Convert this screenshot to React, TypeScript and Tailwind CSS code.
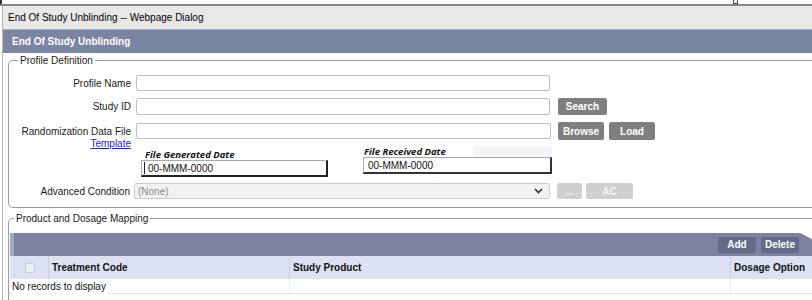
import React from "react";

const Btn = ({ children, w, h = "h-[17px]", cls = "bg-[#7f7f7f] text-white" }: { children: React.ReactNode; w: string; h?: string; cls?: string }) => (
  <div className={`${w} ${h} ${cls} rounded-[2px] flex items-center justify-center font-bold text-[10px]`}>{children}</div>
);

export default function App() {
  return (
    <div className="w-[812px] h-[300px] overflow-hidden bg-white relative text-[10px] text-[#1a1a1a] font-['Liberation_Sans',Arial,sans-serif] leading-[13px]">
      {/* top strip */}
      <div className="h-[6px] relative border-b-2 border-[#858585] bg-white">
        <div className="absolute left-0 top-0 w-[2px] h-[4px] bg-[#333]" />
        <div className="absolute left-[733px] top-0 w-[5px] h-[4px] border border-t-0 border-[#444]" />
      </div>
      <div className="ml-[2px] border-l border-[#b4b4b4]">
        {/* title bar */}
        <div className="h-[23px] bg-[#e8e8e8] pl-[5px] flex items-center text-black">
          End Of Study Unblinding -- Webpage Dialog
        </div>
        {/* header */}
        <div className="h-[24px] bg-[#7b84a1] border-t border-[#aab0c5] pl-[9px] flex items-center text-white font-bold">
          End Of Study Unblinding
        </div>
        {/* body */}
        <div className="pl-[5px]">
          <fieldset className="mt-[1px] border border-[#9c9c9c] rounded-[5px] w-[830px] pb-[8px]">
            <legend className="ml-[9px] px-[2px] leading-[13px]">Profile Definition</legend>
            {/* Profile Name */}
            <div className="flex items-center h-[16px] mt-[8px]">
              <div className="w-[122px] text-right">Profile Name</div>
              <div className="ml-[5px] w-[414px] h-[16px] border border-[#b9bdd1] rounded-[2px] bg-white" />
            </div>
            {/* Study ID */}
            <div className="flex items-center h-[17px] mt-[7px]">
              <div className="w-[122px] text-right">Study ID</div>
              <div className="ml-[5px] w-[414px] h-[17px] border border-[#b9bdd1] rounded-[2px] bg-white" />
              <div className="ml-[8px]"><Btn w="w-[49px]">Search</Btn></div>
            </div>
            {/* Randomization */}
            <div className="flex items-center h-[16px] mt-[8px]">
              <div className="w-[122px] text-right">Randomization Data File</div>
              <div className="ml-[5px] w-[415px] h-[16px] border border-[#b9bdd1] rounded-[2px] bg-white" />
              <div className="ml-[7px] flex gap-[5px]">
                <Btn w="w-[46px]" h="h-[18px]">Browse</Btn>
                <Btn w="w-[46px]" h="h-[18px]">Load</Btn>
              </div>
            </div>
            <div className="w-[122px] text-right leading-[10px] h-[7px]">
              <span className="text-[#2222dd] underline">Template</span>
            </div>
            {/* Dates */}
            <div className="flex items-start h-[31px]">
              <div className="ml-[132px] mt-[3px]">
                <div className="pl-[4px] h-[11px] leading-[11px] font-['Open_Sans',sans-serif] font-bold italic text-[9.5px] text-[#111]">File Generated Date</div>
                <div className="w-[187px] h-[17px] border border-[#aaa] border-r-2 border-b-2 border-r-[#222] border-b-[#222] bg-white flex items-center pl-[2px]">
                  <span className="w-[1px] h-[12px] bg-[#222] mr-[3px]" />
                  <span className="text-[#111]">00-MMM-0000</span>
                </div>
              </div>
              <div className="ml-[35px]">
                <div className="flex">
                  <div className="pl-[1px] w-[110px] h-[11px] leading-[11px] font-['Open_Sans',sans-serif] font-bold italic text-[9.5px] text-[#111]">File Received Date</div>
                  <div className="w-[79px] h-[11px] bg-[#f3f5f9]" />
                </div>
                <div className="w-[189px] h-[17px] border border-[#aaa] border-r-2 border-b-2 border-r-[#333] border-b-[#333] bg-white flex items-center pl-[4px]">
                  <span className="text-[#111]">00-MMM-0000</span>
                </div>
              </div>
            </div>
            {/* Advanced Condition */}
            <div className="flex items-center h-[16px] mt-[6px]">
              <div className="w-[121px] text-right">Advanced Condition</div>
              <div className="ml-[4px] w-[416px] h-[16px] border border-[#c9cbd8] rounded-[2px] bg-[#f2f2f2] flex items-center pl-[3px] pr-[6px] justify-between">
                <span className="text-[#8a8a8a]">(None)</span>
                <svg width="9" height="6" viewBox="0 0 9 6"><polyline points="1,1 4.5,4.5 8,1" fill="none" stroke="#333" strokeWidth="1.6" /></svg>
              </div>
              <div className="ml-[7px] flex gap-[4px]">
                <Btn w="w-[25px]" h="h-[16px]" cls="bg-[#cfcfcf] text-[#f4f4f4]">...</Btn>
                <Btn w="w-[47px]" h="h-[16px]" cls="bg-[#cfcfcf] text-[#f4f4f4]">AC</Btn>
              </div>
            </div>
          </fieldset>

          <fieldset className="mt-[4px] border border-b-0 border-[#9c9c9c] rounded-t-[5px] w-[830px] h-[120px]">
            <legend className="ml-[5px] px-[2px] leading-[13px]">Product and Dosage Mapping</legend>
            <div className="ml-[1px] mt-[8px] w-[815px]">
              {/* toolbar */}
              <div className="flex h-[23px]">
                <div className="w-[4px] bg-[#a3a9c0]" />
                <div className="w-[786px] bg-[#7b83a0] flex items-center justify-end gap-[5px] pr-[1px]">
                  <Btn w="w-[38px]" h="h-[16px]" cls="bg-[#646b89] text-white">Add</Btn>
                  <Btn w="w-[38px]" h="h-[16px]" cls="bg-[#646b89] text-white">Delete</Btn>
                </div>
                <div className="flex-1 bg-white relative">
                  <div className="absolute inset-0 bg-[#a3a9c0] [clip-path:polygon(0_0,60%_35%,60%_100%,0_100%)]" />
                  <div className="absolute inset-0 bg-[#7b83a0] [clip-path:polygon(0_0,50%_28%,50%_100%,0_100%)]" />
                </div>
              </div>
              {/* header */}
              <div className="flex h-[23px] bg-[#dce2f3] font-bold text-[#111]">
                <div className="w-[39px] border-r border-[#c9cfe2] flex items-center pl-[15px]">
                  <div className="w-[10px] h-[10px] rounded-[2px] bg-[#eceff7] border border-[#c3c8dc]" />
                </div>
                <div className="w-[241px] border-r border-[#c9cfe2] flex items-center pl-[3px]">Treatment Code</div>
                <div className="w-[441px] border-r border-[#c9cfe2] flex items-center pl-[3px]">Study Product</div>
                <div className="flex-1 flex items-center pl-[3px]">Dosage Option</div>
              </div>
              {/* row */}
              <div className="relative flex h-[15px] border-b border-[#dcdfe8]">
                <div className="w-[39px] border-r border-[#eceef3]" />
                <div className="w-[241px] border-r border-[#eceef3]" />
                <div className="w-[441px] border-r border-[#eceef3]" />
                <div className="absolute left-[2px] top-[1px] leading-[14px] text-[#111] bg-white pr-[2px]">No records to display</div>
              </div>
            </div>
          </fieldset>
        </div>
      </div>
    </div>
  );
}
